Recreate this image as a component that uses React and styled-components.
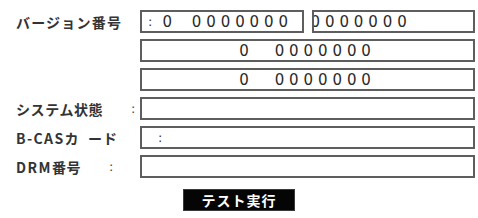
import React from "react";
import styled, { createGlobalStyle } from "styled-components";

const Global = createGlobalStyle`
  html, body { margin: 0; padding: 0; background: #fff; }
  body { width: 478px; height: 218px; overflow: hidden; }
`;

const Page = styled.div`
  padding: 10px 3px 0 16px;
  display: flex;
  flex-direction: column;
  gap: 6px;
  font-family: "Noto Sans CJK JP", "DejaVu Sans", sans-serif;
  color: #262626;
`;

const Row = styled.div`
  display: grid;
  grid-template-columns: 124px 1fr;
  height: 23px;
  align-items: stretch;
`;

const Label = styled.div`
  display: flex;
  align-items: center;
  font-size: 14px;
  font-weight: 700;
  letter-spacing: ${(p) => p.$ls ?? 0.5}px;
  white-space: pre;
  color: #333;
`;

const Latin = styled.span`
  letter-spacing: ${(p) => p.$ls ?? 2}px;
`;

const Colon = styled.span`
  margin-left: auto;
  margin-right: ${(p) => p.$right}px;
  font-family: "DejaVu Sans", sans-serif;
  font-weight: 400;
  font-size: 13px;
  color: #444;
`;

const Fields = styled.div`
  display: grid;
  grid-template-columns: 1fr 1fr;
  gap: 8px;
`;

const Box = styled.div`
  box-sizing: border-box;
  height: 23px;
  border: 2px solid #5e5e5e;
  display: flex;
  align-items: center;
  justify-content: ${(p) => (p.$center ? "center" : "flex-start")};
  padding-left: ${(p) => p.$pad ?? 0}px;
  font-family: "DejaVu Sans", sans-serif;
  font-size: 15px;
  color: #2a2a2a;
  white-space: pre;
  overflow: hidden;
`;

const BoxColon = styled.span`
  font-size: 13px;
  color: #333;
  margin-right: ${(p) => p.$gap ?? 0}px;
`;

const Digits = styled.span`
  letter-spacing: 4.9px;
  margin-left: ${(p) => p.$ml ?? 0}px;
`;

const ButtonRow = styled.div`
  display: flex;
  justify-content: center;
  padding-top: 5px;
  padding-right: 13px;
`;

const Button = styled.button`
  width: 112px;
  height: 22px;
  background: #050505;
  border: 1px solid #3a3a3a;
  color: #fff;
  font-family: "Noto Sans CJK JP", sans-serif;
  font-weight: 700;
  font-size: 14px;
  letter-spacing: 1px;
  padding: 0;
  line-height: 20px;
`;

export default function App() {
  return (
    <>
      <Global />
      <Page>
        <Row>
          <Label $ls={1.2}>バージョン番号</Label>
          <Fields>
            <Box $pad={6}>
              <BoxColon $gap={10}>:</BoxColon>
              <Digits>0</Digits>
              <Digits $ml={15}>0000000</Digits>
            </Box>
            <Box $pad={0}>
              <Digits $ml={-3}>0000000</Digits>
            </Box>
          </Fields>
        </Row>
        <Row>
          <span />
          <Box $center>
            <Digits>0</Digits>
            <Digits $ml={21}>0000000</Digits>
          </Box>
        </Row>
        <Row>
          <span />
          <Box $center>
            <Digits>0</Digits>
            <Digits $ml={21}>0000000</Digits>
          </Box>
        </Row>
        <Row>
          <Label $ls={0.6}>
            システム状態
            <Colon $right={4}>:</Colon>
          </Label>
          <Box />
        </Row>
        <Row>
          <Label $ls={1}>
            <Latin $ls={1.4}>B-CAS</Latin>カ  ード
          </Label>
          <Box $pad={16}>
            <BoxColon>:</BoxColon>
          </Box>
        </Row>
        <Row>
          <Label $ls={0.5}>
            <Latin $ls={1.5}>DRM</Latin>番号
            <Colon $right={26}>:</Colon>
          </Label>
          <Box />
        </Row>
        <ButtonRow>
          <Button>テスト実行</Button>
        </ButtonRow>
      </Page>
    </>
  );
}
